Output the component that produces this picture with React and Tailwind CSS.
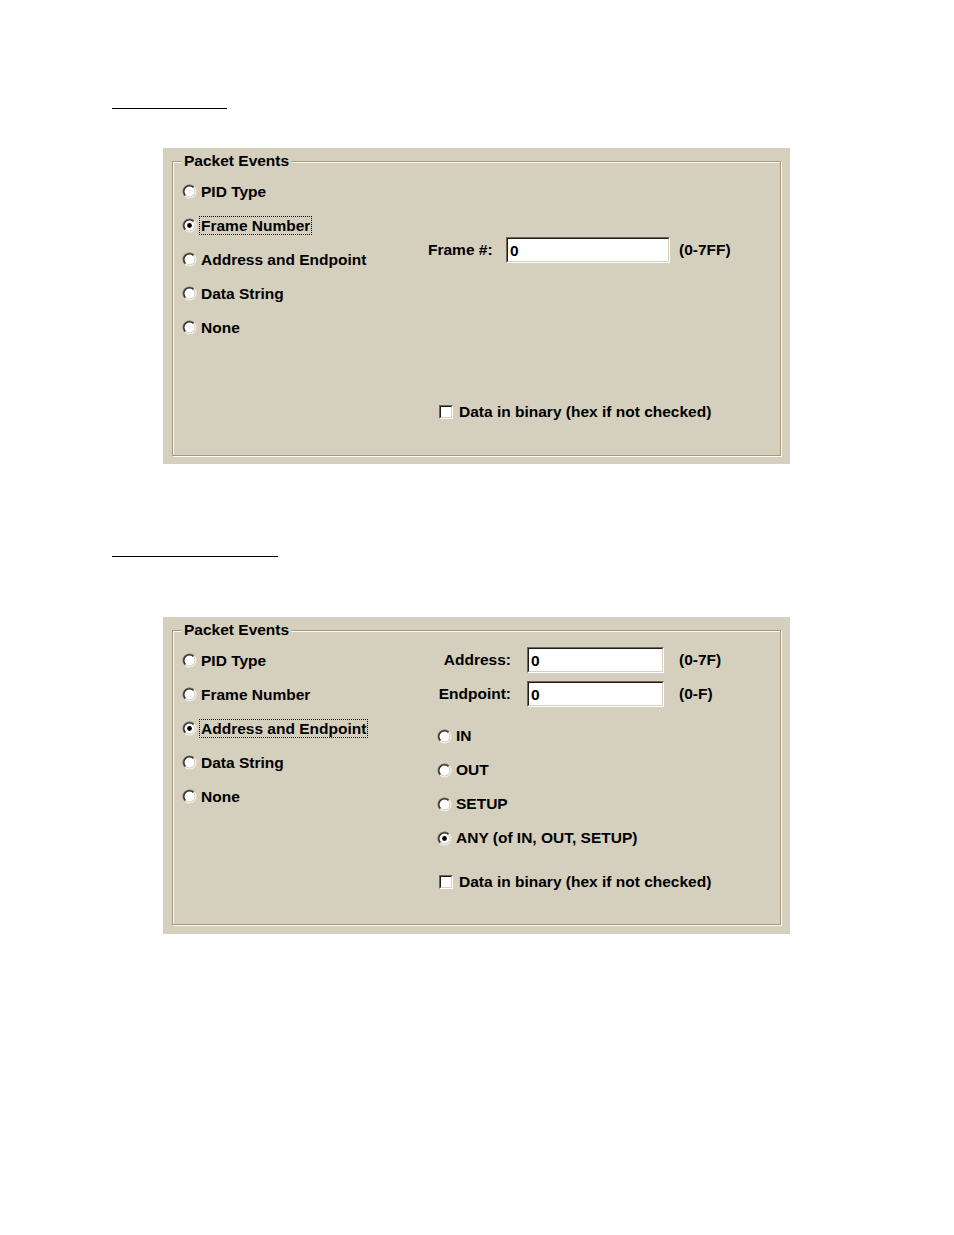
import React from "react";

const BG = "bg-[#d5cfbe]";

function Radio({ checked }) {
  return (
    <svg width="15" height="15" viewBox="0 0 15 15" className="shrink-0">
      <path d="M2.55 12.45 A7 7 0 0 1 12.45 2.55 Z" fill="#6f6656" />
      <path d="M2.55 12.45 A7 7 0 0 0 12.45 2.55 Z" fill="#f6f3ec" />
      <path d="M3.257 11.743 A6 6 0 0 1 11.743 3.257 Z" fill="#1f1c18" />
      <path d="M3.257 11.743 A6 6 0 0 0 11.743 3.257 Z" fill="#d5cfbe" />
      <circle cx="7.5" cy="7.5" r="5" fill="#ffffff" />
      {checked && <circle cx="7.5" cy="7.5" r="2.4" fill="#000000" />}
    </svg>
  );
}

function Checkbox() {
  return (
    <div className="w-[14px] h-[14px] shrink-0 border border-t-[#6f6656] border-l-[#6f6656] border-b-white border-r-white">
      <div className="w-full h-full bg-white border border-t-[#1f1c18] border-l-[#1f1c18] border-b-[#d5cfbe] border-r-[#d5cfbe]" />
    </div>
  );
}

function Input({ w, value }) {
  return (
    <div
      className={`${w} h-[26px] shrink-0 border border-t-[#6f6656] border-l-[#6f6656] border-b-white border-r-white`}
    >
      <div className="w-full h-full bg-white border border-t-[#1f1c18] border-l-[#1f1c18] border-b-[#d5cfbe] border-r-[#d5cfbe] flex items-center pl-[2px] leading-[17px]">
        {value}
      </div>
    </div>
  );
}

function RadioRow({ label, checked, focused }) {
  return (
    <div className="h-[34px] flex items-center">
      <Radio checked={checked} />
      <span
        className={`ml-[2px] px-[1px] leading-[17px] border ${
          focused ? "border-dotted border-black" : "border-transparent"
        }`}
      >
        {label}
      </span>
    </div>
  );
}

function CheckRow() {
  return (
    <div className="h-[20px] flex items-center pl-[11px]">
      <Checkbox />
      <span className="ml-[6px]">Data in binary (hex if not checked)</span>
    </div>
  );
}

function Panel({ selected, height, pb, children }) {
  const items = ["PID Type", "Frame Number", "Address and Endpoint", "Data String", "None"];
  return (
    <div className={`ml-[163px] w-[627px] ${height} ${BG} flex flex-col pt-[4px] px-[9px] ${pb}`}>
      <fieldset className="flex-1 border border-[#a8977b] shadow-[inset_1px_1px_0_#fbf9f4,1px_1px_0_#fbf9f4]">
        <legend className={`ml-[8px] px-[3px] leading-[18px] ${BG}`}>Packet Events</legend>
        <div className="flex">
          <div className="w-[255px] pl-[9px] pt-[4px] flex flex-col">
            {items.map((it) => (
              <RadioRow key={it} label={it} checked={it === selected} focused={it === selected} />
            ))}
          </div>
          <div className="flex-1 flex flex-col">{children}</div>
        </div>
      </fieldset>
    </div>
  );
}

export default function App() {
  return (
    <div
      className="w-[954px] h-[1235px] bg-white flex flex-col text-black font-bold text-[15.5px]"
      style={{ fontFamily: '"Liberation Sans", Arial, sans-serif' }}
    >
      <div className="ml-[112px] mt-[108px] w-[115px] h-px bg-black" />
      <div className="mt-[39px]">
        <Panel selected="Frame Number" height="h-[316px]" pb="pb-[8px]">
          <div className="mt-[67px] h-[26px] flex items-center">
            <span className="w-[78px]">Frame #:</span>
            <Input w="w-[164px]" value="0" />
            <span className="ml-[9px]">(0-7FF)</span>
          </div>
          <div className="mt-[139px]">
            <CheckRow />
          </div>
        </Panel>
      </div>
      <div className="ml-[112px] mt-[92px] w-[166px] h-px bg-black" />
      <div className="mt-[60px]">
        <Panel selected="Address and Endpoint" height="h-[317px]" pb="pb-[9px]">
          <div className="mt-[8px] h-[26px] flex items-center">
            <span className="w-[83px] text-right">Address:</span>
            <span className="ml-[16px]">
              <Input w="w-[137px]" value="0" />
            </span>
            <span className="ml-[15px]">(0-7F)</span>
          </div>
          <div className="mt-[8px] h-[26px] flex items-center">
            <span className="w-[83px] text-right">Endpoint:</span>
            <span className="ml-[16px]">
              <Input w="w-[137px]" value="0" />
            </span>
            <span className="ml-[15px]">(0-F)</span>
          </div>
          <div className="mt-[12px] pl-[9px] flex flex-col">
            {["IN", "OUT", "SETUP", "ANY (of IN, OUT, SETUP)"].map((t) => (
              <div key={t} className="h-[34px] flex items-center">
                <Radio checked={t.startsWith("ANY")} />
                <span className="ml-[4px]">{t}</span>
              </div>
            ))}
          </div>
          <div className="mt-[17px]">
            <CheckRow />
          </div>
        </Panel>
      </div>
    </div>
  );
}
